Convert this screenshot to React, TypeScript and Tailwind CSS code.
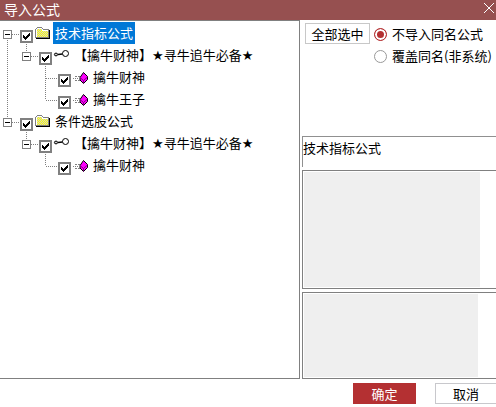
import { useState } from "react";

type TreeNode = {
  id: string;
  label: string;
  icon: "folder" | "key" | "gem";
  starred?: boolean;
  children?: TreeNode[];
};

const formulas: TreeNode[] = [
  {
    id: "indicator",
    label: "技术指标公式",
    icon: "folder",
    children: [
      {
        id: "indicator-pack",
        label: "【擒牛财神】",
        icon: "key",
        starred: true,
        children: [
          { id: "indicator-1", label: "擒牛财神", icon: "gem" },
          { id: "indicator-2", label: "擒牛王子", icon: "gem" },
        ],
      },
    ],
  },
  {
    id: "picker",
    label: "条件选股公式",
    icon: "folder",
    children: [
      {
        id: "picker-pack",
        label: "【擒牛财神】",
        icon: "key",
        starred: true,
        children: [{ id: "picker-1", label: "擒牛财神", icon: "gem" }],
      },
    ],
  },
];

const dotted = {
  stroke: "#808080",
  strokeDasharray: "1 1",
  shapeRendering: "crispEdges" as const,
};

function FolderIcon() {
  return (
    <svg width="16" height="16" viewBox="0 0 16 16" shapeRendering="crispEdges">
      <path d="M2 13h13V5h1v9H2z" fill="#000" />
      <path d="M1 4h1V3h1V2h5v1h1v1h6v9H1z" fill="#808080" />
      <path d="M2 4h1V3h5v1h1v1h5v7H2z" fill="#fff" />
      <path d="M3 4h5v2h6v6H3z" fill="#ffff00" />
      {/* Dithered fill, every other pixel of each row */}
      <path
        d="M3 4.500h5M4 5.500h4M3 6.500h11M4 7.500h10M3 8.500h11M4 9.500h10M3 10.500h11M4 11.500h10"
        stroke="#d0d0d0"
        strokeDasharray="1 1"
      />
    </svg>
  );
}

function KeyIcon() {
  return (
    <svg width="16" height="16" viewBox="0 0 16 16" fill="none" stroke="#000">
      <ellipse cx="3" cy="7.500" rx="1.600" ry="1.400" fill="#ccc" />
      <path d="M5 7.500l4.500-.5" strokeWidth="1.300" />
      <circle cx="12.500" cy="6.500" r="3" />
    </svg>
  );
}

function GemIcon() {
  return (
    <svg width="16" height="16" viewBox="0 0 16 16">
      <g stroke="#808080" shapeRendering="crispEdges">
        <path d="M3 7.500h5M3 11.500h5" strokeDasharray="2 1" />
        <path d="M1 9.500h6" strokeDasharray="1 1" />
      </g>
      <path
        d="M11.500 3.500l4 4v3l-4 4-3.500-3.500v-2.500z"
        fill="#f0f"
        stroke="#000"
      />
      <path d="M8.500 9l3 2.500 4-3.500M11.500 11.500v3" stroke="#800080" fill="none" />
    </svg>
  );
}

const icons = { folder: FolderIcon, key: KeyIcon, gem: GemIcon };

function Star() {
  return <span className="font-['DejaVu_Sans',sans-serif]">★</span>;
}

function TreeRow({
  node,
  guides,
  isFirst,
  isLast,
}: {
  node: TreeNode;
  guides: boolean[];
  isFirst: boolean;
  isLast: boolean;
}) {
  const [open, setOpen] = useState(true);
  const [checked, setChecked] = useState(true);
  const Icon = icons[node.icon];
  const childGuides = [...guides, !isLast];

  return (
    <li>
      <div className="flex h-[22px] items-start">
        {guides.map((line, i) => (
          <svg key={i} width="19" height="22" className="shrink-0">
            {line && <path d="M7.500 0v22" {...dotted} />}
          </svg>
        ))}

        {/* Branch line and expander */}
        <div className="relative w-5 shrink-0">
          <svg width="20" height="22">
            {!isFirst && <path d="M7.500 0v12" {...dotted} />}
            {!isLast && <path d="M7.500 12v10" {...dotted} />}
            <path d="M8 12.500h12" {...dotted} />
          </svg>
          {node.children && (
            <button
              type="button"
              aria-label={open ? "折叠" : "展开"}
              className="absolute top-2 left-[3px] flex size-[9px] items-center justify-center border border-[#808080] bg-white"
              onClick={() => setOpen(!open)}
            >
              <svg width="5" height="5" stroke="#000" shapeRendering="crispEdges">
                <path d="M0 2.500h5" />
                {!open && <path d="M2.500 0v5" />}
              </svg>
            </button>
          )}
        </div>

        <span className="relative mt-2 size-[13px] shrink-0">
          <input
            id={node.id}
            type="checkbox"
            checked={checked}
            onChange={() => setChecked(!checked)}
            className="block size-[13px] appearance-none border-2 border-[#808080] bg-white"
          />
          {checked && (
            <svg
              width="13"
              height="13"
              className="pointer-events-none absolute inset-0"
              shapeRendering="crispEdges"
            >
              <path d="M3 5h1v1h1v1h1v-1h1v-1h1v-1h1v-1h1v3h-1v1h-1v1h-1v1h-1v1h-1v-1h-1v-1h-1z" />
            </svg>
          )}
        </span>

        <span className="mt-[3px] ml-px shrink-0">
          <Icon />
        </span>
        <label
          htmlFor={node.id}
          className={`ml-[3px] h-[22px] px-0.5 leading-[22px] whitespace-nowrap ${
            node.id === "indicator" ? "bg-[#0078d7] text-white" : ""
          }`}
        >
          {node.label}
          {node.starred && (
            <>
              <Star />
              寻牛追牛必备
              <Star />
            </>
          )}
        </label>
      </div>
      {node.children && open && (
        <ul>
          {node.children.map((child, i) => (
            <TreeRow
              key={child.id}
              node={child}
              guides={childGuides}
              isFirst={false}
              isLast={i === node.children!.length - 1}
            />
          ))}
        </ul>
      )}
    </li>
  );
}

const modes = [
  { value: "skip", label: "不导入同名公式" },
  { value: "overwrite", label: "覆盖同名(非系统)" },
];

export default function App() {
  const [mode, setMode] = useState("skip");

  return (
    <div className="overflow-hidden bg-white font-['Noto_Sans_CJK_SC',sans-serif] text-[13px] text-black">
      {/* Title bar */}
      <header className="flex h-5 items-start justify-between bg-[#965050] pr-0.5 pl-1 text-white">
        <h1 className="text-sm leading-[18px]">导入公式</h1>
        <button type="button" aria-label="关闭" className="pt-[3px]">
          <svg width="10" height="10" stroke="#fff">
            <path d="M0 0l10 10M10 0L0 10" />
          </svg>
        </button>
      </header>

      <main className="flex">
        <section className="min-w-0 flex-1 overflow-hidden border-t border-r border-b border-[#808080] pt-px">
          <ul>
            {formulas.map((node, i) => (
              <TreeRow
                key={node.id}
                node={node}
                guides={[]}
                isFirst={i === 0}
                isLast={i === formulas.length - 1}
              />
            ))}
          </ul>
        </section>

        <section className="flex w-[196px] shrink-0 flex-col gap-[3px] pl-0.5">
          <div className="flex h-[113px] items-start gap-1 pt-[3px] pl-[3px]">
            <button
              type="button"
              className="h-[21px] w-[65px] border border-[#c8c8c8] leading-[19px]"
            >
              全部选中
            </button>
            <fieldset className="min-w-0">
              {modes.map((m) => (
                <label
                  key={m.value}
                  className="flex h-[22px] items-center gap-[5px] whitespace-nowrap"
                >
                  <input
                    type="radio"
                    name="mode"
                    value={m.value}
                    checked={mode === m.value}
                    onChange={() => setMode(m.value)}
                    className="size-[13px] shrink-0 appearance-none rounded-full border border-[#999] bg-white checked:border-[#b43032] checked:bg-[#b43032] checked:shadow-[inset_0_0_0_2px_#fff]"
                  />
                  {m.label}
                </label>
              ))}
            </fieldset>
          </div>

          <input
            type="text"
            aria-label="公式名称"
            readOnly
            value="技术指标公式"
            className="h-[31px] w-full border-t border-l border-[#909090] pb-2.5 outline-none"
          />
          <div className="border-t border-b border-l border-[#808080] py-px pr-4 pl-px">
            <textarea
              aria-label="公式说明"
              readOnly
              className="block h-[115px] w-full resize-none bg-[#efefef] outline-none"
            />
          </div>
          <div className="border-t border-b border-l border-[#808080] py-px pr-[18px] pl-px">
            <textarea
              aria-label="参数说明"
              readOnly
              className="block h-[83px] w-full resize-none bg-[#efefef] outline-none"
            />
          </div>
        </section>
      </main>

      <footer className="flex justify-end gap-[19px] pt-1 pb-[3px]">
        <button
          type="button"
          className="h-[21px] w-[63px] bg-[#b43032] leading-[21px] text-white"
        >
          确定
        </button>
        <button
          type="button"
          className="h-[21px] w-[61px] border border-r-0 border-[#c8c8cc] leading-[19px]"
        >
          取消
        </button>
      </footer>
    </div>
  );
}
